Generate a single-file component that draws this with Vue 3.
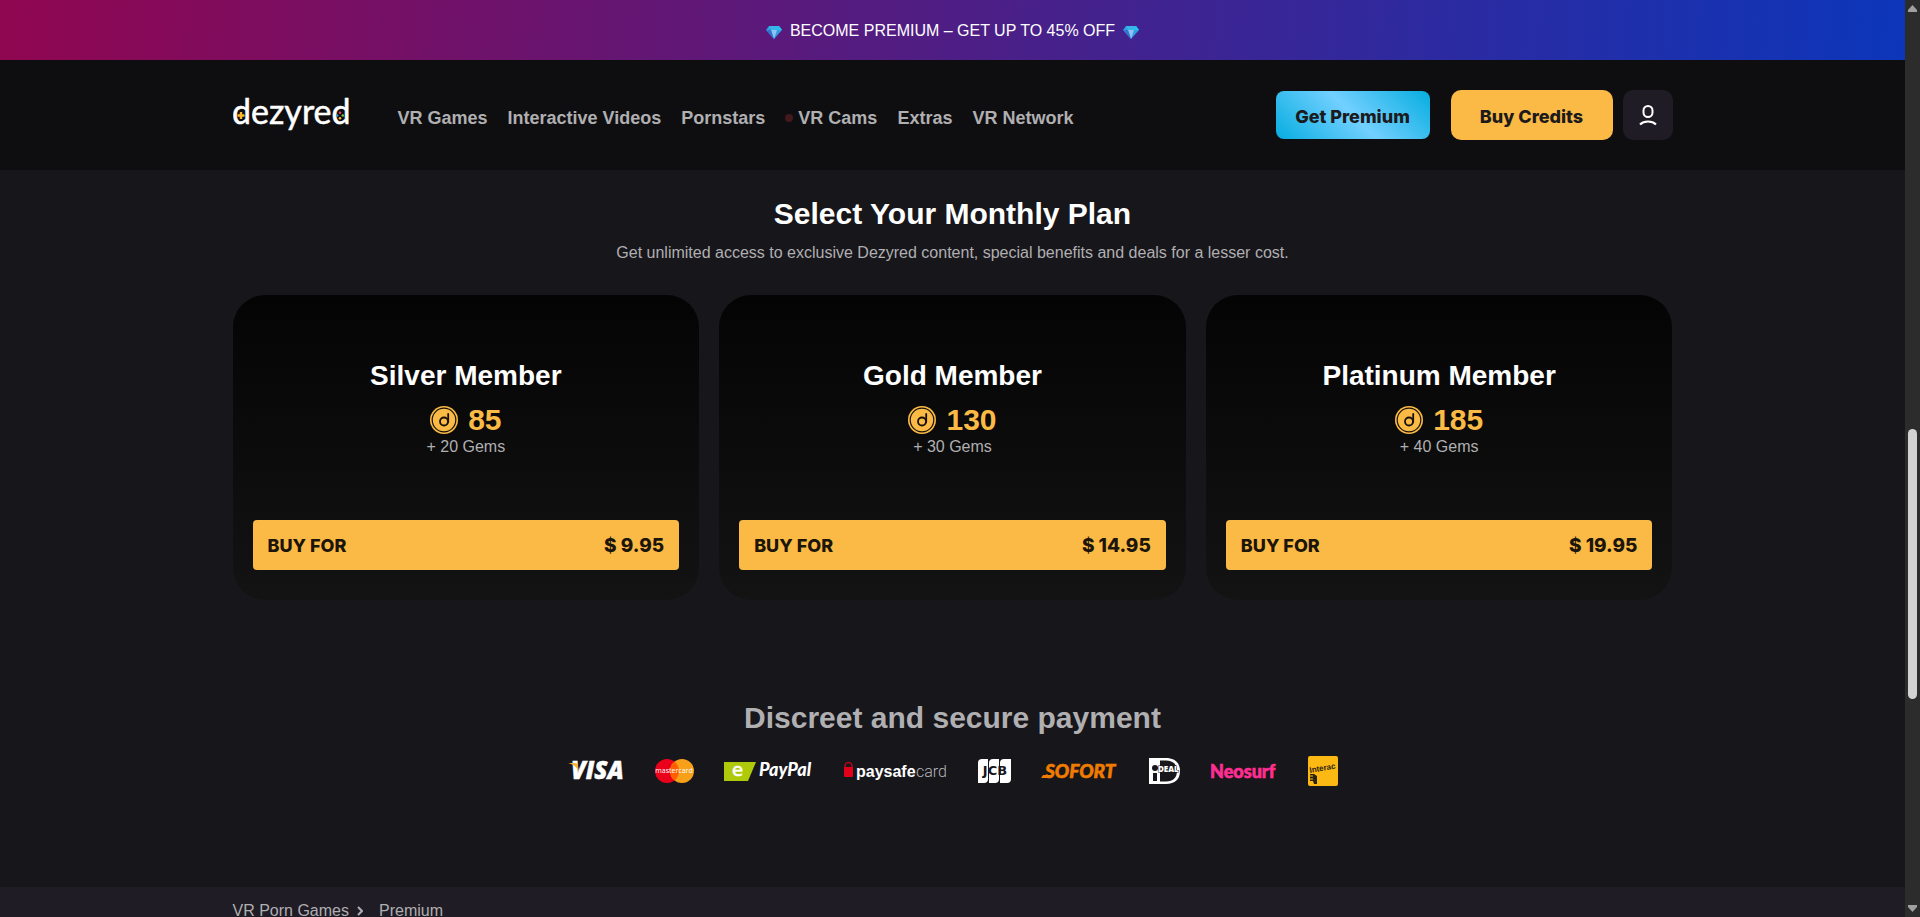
<template>
    <div class="window">
        <div class="page">
            <a href="#" class="banner">
                <svg class="gem" viewBox="0 0 16 13" aria-hidden="true">
                    <path d="M3 0h10l3 4-8 9-8-9z" fill="#2f9fe0" />
                    <path d="M3 0h10l-2 4H5z" fill="#38b6ea" />
                    <path d="M5 4h6l-3 9z" fill="#8fc3f5" />
                    <path d="M0 4h5l3 9z" fill="#3474cf" />
                    <path d="M13 0l3 4h-5z" fill="#20c8ef" />
                </svg>
                <span>BECOME PREMIUM – GET UP TO 45% OFF</span>
                <svg class="gem" viewBox="0 0 16 13" aria-hidden="true">
                    <path d="M3 0h10l3 4-8 9-8-9z" fill="#2f9fe0" />
                    <path d="M3 0h10l-2 4H5z" fill="#38b6ea" />
                    <path d="M5 4h6l-3 9z" fill="#8fc3f5" />
                    <path d="M0 4h5l3 9z" fill="#3474cf" />
                    <path d="M13 0l3 4h-5z" fill="#20c8ef" />
                </svg>
            </a>

            <header class="header">
                <div class="container header-row">
                    <a href="#" class="logo" aria-label="dezyred">
                        <svg width="117" height="50" viewBox="0 0 117 50">
                            <text x="-1" y="34" class="logo-text">dezyred</text>
                            <path d="M8 22v7M4.500 25.500h7" stroke="#fbb62b" stroke-width="2.400" />
                            <circle cx="107" cy="22.700" r="1.300" fill="#e0405f" />
                            <circle cx="104.200" cy="25.500" r="1.300" fill="#2a9fdc" />
                            <circle cx="109.800" cy="25.500" r="1.300" fill="#7cc242" />
                            <circle cx="107" cy="28.300" r="1.300" fill="#fbb62b" />
                        </svg>
                    </a>
                    <nav class="nav">
                        <a v-for="item in navItems" :key="item.label" href="#">
                            <i v-if="item.live" class="live-dot"></i>{{ item.label }}
                        </a>
                    </nav>
                    <div class="actions">
                        <button type="button" class="btn btn-premium">Get Premium</button>
                        <button type="button" class="btn btn-credits">Buy Credits</button>
                        <button type="button" class="btn-user" aria-label="Account">
                            <svg width="18" height="22" viewBox="0 0 18 22" fill="none" stroke="#fff" stroke-width="2">
                                <rect x="4.500" y="2" width="9" height="11" rx="4.500" />
                                <path d="M1 20.500c4-4 12-4 16 0" />
                            </svg>
                        </button>
                    </div>
                </div>
            </header>

            <main class="main container">
                <h1 class="title">Select Your Monthly Plan</h1>
                <p class="subtitle">Get unlimited access to exclusive Dezyred content, special benefits and deals for a lesser cost.</p>

                <section class="plans">
                    <article v-for="plan in plans" :key="plan.name" class="plan">
                        <h2>{{ plan.name }}</h2>
                        <div class="credits">
                            <svg width="28" height="28" viewBox="0 0 28 28" aria-hidden="true">
                                <circle cx="14" cy="14" r="14" fill="#fbba45" />
                                <circle cx="14" cy="14" r="11.800" fill="none" stroke="#15110a" stroke-width="1.200" />
                                <circle cx="14" cy="15.500" r="4" fill="none" stroke="#15110a" stroke-width="1.800" />
                                <path d="M18.200 8v8" stroke="#15110a" stroke-width="1.800" stroke-linecap="round" />
                            </svg>
                            <span>{{ plan.credits }}</span>
                        </div>
                        <p class="gems">+ {{ plan.gems }} Gems</p>
                        <button type="button" class="buy">
                            <span>BUY FOR</span>
                            <span class="price">$ {{ plan.price }}</span>
                        </button>
                    </article>
                </section>

                <section class="payment">
                    <h2>Discreet and secure payment</h2>
                    <div class="methods">
                        <svg width="57" height="30" viewBox="0 0 57 30" role="img" aria-label="Visa">
                            <text x="3" y="23" class="visa">VISA</text>
                            <path d="M0 7h6c3 0 4 1 4 3l1 6C9 11 5 8 0 7z" fill="#f9b233" />
                        </svg>
                        <svg width="39" height="30" viewBox="0 0 39 30" role="img" aria-label="Mastercard">
                            <circle cx="12" cy="15" r="12" fill="#eb001b" />
                            <circle cx="27" cy="15" r="12" fill="#f9a01b" />
                            <path d="M19.500 5.600a12 12 0 0 1 0 18.800 12 12 0 0 1 0-18.800z" fill="#ff5f00" />
                            <text x="19" y="17" class="mastercard" text-anchor="middle">mastercard</text>
                        </svg>
                        <svg width="90" height="30" viewBox="0 0 90 30" role="img" aria-label="PayPal">
                            <path d="M0 6h32l-8 19H0z" fill="#afca0b" />
                            <text x="8" y="20" class="paypal-e">e</text>
                            <text x="35" y="20" class="paypal">PayPal</text>
                        </svg>
                        <svg width="104" height="30" viewBox="0 0 104 30" role="img" aria-label="paysafecard">
                            <path d="M1 12V10a3.500 3.500 0 0 1 7 0v2" fill="none" stroke="#b0091d" stroke-width="1.600" />
                            <rect x="0" y="11" width="9" height="10" rx="1" fill="#e2001a" />
                            <text x="12" y="21" class="paysafe">paysafe</text>
                            <text x="72" y="21" class="paysafe-card">card</text>
                        </svg>
                        <svg width="33" height="30" viewBox="0 0 33 30" role="img" aria-label="JCB">
                            <path d="M4 3h6v20q0 4-4 4H0V7q0-4 4-4z" fill="#fff" />
                            <path d="M15 3h6v20q0 4-4 4h-6V7q0-4 4-4z" fill="#fff" />
                            <path d="M26 3h7v20q0 4-4 4h-7V7q0-4 4-4z" fill="#fff" />
                            <text x="17" y="19" class="jcb" text-anchor="middle">JCB</text>
                        </svg>
                        <svg width="78" height="30" viewBox="0 0 78 30" role="img" aria-label="Sofort">
                            <path d="M0 22l2-3h9l-2 3z" fill="#ef7c00" />
                            <text x="4" y="22" class="sofort">SOFORT</text>
                        </svg>
                        <svg width="31" height="30" viewBox="0 0 31 30" role="img" aria-label="iDEAL">
                            <path d="M0 2h17c9 0 14 5 14 13s-5 13-14 13H0z" fill="#fff" />
                            <path d="M3 4.500h14c7 0 11 4 11 10.500s-4 10.500-11 10.500H3z" fill="#17161b" />
                            <path d="M1 3h10v24H1z" fill="#fff" />
                            <circle cx="6" cy="12" r="3" fill="#17161b" />
                            <path d="M4 17h4v8H4z" fill="#17161b" />
                            <text x="9" y="16" class="ideal">DEAL</text>
                        </svg>
                        <svg width="68" height="30" viewBox="0 0 68 30" role="img" aria-label="Neosurf">
                            <text x="0" y="22" class="neosurf">Neosurf</text>
                        </svg>
                        <svg width="30" height="30" viewBox="0 0 30 30" role="img" aria-label="Interac">
                            <rect width="30" height="30" rx="2" fill="#fdb913" />
                            <path d="M2 18h4l3 2v8H6l-1-3H2z" fill="#2b2413" />
                            <path d="M2 20h3M2 23h3" stroke="#fdb913" stroke-width="1" />
                            <text x="2" y="17" class="interac" transform="rotate(-10 2 17)">Interac</text>
                        </svg>
                    </div>
                </section>
            </main>

            <footer class="footer">
                <div class="container crumbs">
                    <a href="#">VR Porn Games</a>
                    <svg width="6" height="10" viewBox="0 0 6 10" fill="none" stroke="#b0afb1" stroke-width="2">
                        <path d="M1 1l4 4-4 4" />
                    </svg>
                    <a href="#" class="current">Premium</a>
                </div>
            </footer>
        </div>

        <div class="scrollbar" aria-hidden="true">
            <svg width="9" height="7" viewBox="0 0 9 7"><path d="M4.500 0L9 5v2H0V5z" fill="#a0a0a0" /></svg>
            <div class="track-top"></div>
            <div class="thumb"></div>
            <div class="track-bottom"></div>
            <svg width="9" height="7" viewBox="0 0 9 7"><path d="M4.500 7L9 2V0H0v2z" fill="#a0a0a0" /></svg>
        </div>
    </div>
</template>

<script setup>
    import { ref } from 'vue';

    const navItems = ref([
        { label: 'VR Games' },
        { label: 'Interactive Videos' },
        { label: 'Pornstars' },
        { label: 'VR Cams', live: true },
        { label: 'Extras' },
        { label: 'VR Network' },
    ]);

    const plans = ref([
        { name: 'Silver Member', credits: 85, gems: 20, price: '9.95' },
        { name: 'Gold Member', credits: 130, gems: 30, price: '14.95' },
        { name: 'Platinum Member', credits: 185, gems: 40, price: '19.95' },
    ]);
</script>

<style>
    body {
        margin: 0;
        background: #17161b;
    }
</style>

<style scoped>
    * {
        box-sizing: border-box;
    }

    h1, h2, p {
        margin: 0;
    }

    a {
        color: inherit;
        text-decoration: none;
    }

    button {
        border: none;
        padding: 0;
        cursor: pointer;
    }

    svg {
        display: block;
        flex-shrink: 0;
    }

    .window {
        display: flex;
        height: 100vh;
        overflow: hidden;
        background: #17161b;
        color: #b0afb1;
        font-family: "Liberation Sans", Arial, sans-serif;
        font-size: 16px;
        line-height: 20px;
    }

    .page {
        flex: 1;
        min-width: 0;
        overflow: hidden;
    }

    .container {
        max-width: 1440px;
        margin: 0 auto;
    }

    /* Top banner */
    .banner {
        display: flex;
        align-items: center;
        justify-content: center;
        gap: 8px;
        height: 60px;
        padding-top: 2px;
        background: linear-gradient(95deg, #900650, #0c36ba);
        color: #fff;
    }

    .gem {
        width: 16px;
        height: 13px;
        margin-top: 2px;
    }

    /* Header */
    .header {
        background: #0e0e10;
    }

    .header-row {
        display: flex;
        align-items: center;
        height: 110px;
    }

    .logo-text {
        font: 400 34px Lato, sans-serif;
        fill: #fff;
        stroke: #fff;
        stroke-width: 0.5px;
    }

    .nav {
        display: flex;
        gap: 20px;
        margin-left: 48px;
        padding-top: 6px;
        font-size: 18px;
        font-weight: 700;
        white-space: nowrap;
    }

    .nav a {
        display: flex;
        align-items: center;
    }

    .live-dot {
        width: 8px;
        height: 8px;
        margin-right: 5px;
        border-radius: 50%;
        background: #42191d;
    }

    .actions {
        display: flex;
        align-items: center;
        margin-left: auto;
    }

    .btn {
        padding-top: 2px;
        font: 800 18px Inter, sans-serif;
        color: #1c1a1c;
        white-space: nowrap;
    }

    .btn-premium {
        width: 154px;
        height: 48px;
        margin-right: 21px;
        border-radius: 8px;
        background: linear-gradient(45deg, #06ade0, #72d0ff 50%, #06ade0);
    }

    .btn-credits {
        width: 162px;
        height: 50px;
        margin-right: 10px;
        border-radius: 10px;
        background: #fbba45;
    }

    .btn-user {
        display: flex;
        align-items: center;
        justify-content: center;
        width: 50px;
        height: 50px;
        border-radius: 10px;
        background: #1f1c25;
    }

    /* Plans */
    .main {
        padding: 24px 0 101px;
        text-align: center;
    }

    .title {
        color: #fff;
        font-size: 30px;
        line-height: 40px;
    }

    .subtitle {
        margin-top: 9px;
    }

    .plans {
        display: grid;
        grid-template-columns: repeat(3, 1fr);
        gap: 20px;
        margin-top: 32px;
    }

    .plan {
        padding: 63px 20px 30px;
        border-radius: 32px;
        background: linear-gradient(#040404, #131314);
    }

    .plan h2 {
        color: #fff;
        font-size: 28px;
        line-height: 36px;
    }

    .credits {
        display: flex;
        align-items: center;
        justify-content: center;
        gap: 10px;
        margin-top: 11px;
        color: #fbba45;
        font-size: 30px;
        font-weight: 700;
        line-height: 30px;
    }

    .gems {
        margin-top: 2px;
    }

    .buy {
        display: flex;
        align-items: center;
        justify-content: space-between;
        width: 100%;
        height: 50px;
        margin-top: 63px;
        padding: 1px 15px 0;
        border-radius: 4px;
        background: #fbba45;
        color: #1c150a;
        font: 800 18px Inter, sans-serif;
    }

    .price {
        font-size: 19px;
    }

    /* Payment */
    .payment {
        margin-top: 98px;
    }

    .payment h2 {
        font-size: 30px;
        line-height: 40px;
    }

    .methods {
        display: flex;
        align-items: center;
        justify-content: center;
        gap: 30px;
        margin-top: 18px;
    }

    .visa {
        font: italic 800 24px "Open Sans", sans-serif;
        fill: #fff;
        stroke: #fff;
        stroke-width: 0.5px;
    }

    .mastercard {
        font: 400 7px "Open Sans", sans-serif;
        fill: #fff;
    }

    .paypal {
        font: italic 900 18px Lato, sans-serif;
        fill: #fff;
    }

    .paypal-e {
        font: 400 18px "DejaVu Sans", sans-serif;
        fill: #fff;
        stroke: #fff;
        stroke-width: 0.6px;
    }

    .paysafe {
        font: 700 16px "Liberation Sans", sans-serif;
        fill: #fff;
    }

    .paysafe-card {
        font: 300 16px Roboto, sans-serif;
        fill: #b5b5b8;
    }

    .jcb {
        font: 700 13px "DejaVu Sans", sans-serif;
        fill: #17161b;
    }

    .sofort {
        font: italic 900 19px Lato, sans-serif;
        fill: #ef7c00;
        stroke: #ef7c00;
        stroke-width: 0.6px;
    }

    .ideal {
        font: 800 8px "Open Sans", sans-serif;
        fill: #fff;
        stroke: #17161b;
        stroke-width: 1px;
        paint-order: stroke;
    }

    .neosurf {
        font: 900 18px Lato, sans-serif;
        fill: #ff2e93;
        stroke: #ff2e93;
        stroke-width: 0.6px;
    }

    .interac {
        font: 700 8px "Liberation Sans", sans-serif;
        fill: #2b2413;
    }

    /* Footer */
    .footer {
        background: #1f1c25;
    }

    .crumbs {
        display: flex;
        align-items: center;
        gap: 8px;
        padding: 14px 0;
    }

    .current {
        margin-left: 8px;
    }

    /* Scrollbar */
    .scrollbar {
        display: flex;
        flex-direction: column;
        align-items: center;
        width: 15px;
        padding: 5px 0;
        background: #2c2c2c;
    }

    .track-top {
        flex: 417;
    }

    .thumb {
        flex: 270;
        width: 9px;
        border-radius: 5px;
        background: #d2d2d2;
    }

    .track-bottom {
        flex: 206;
    }
</style>
